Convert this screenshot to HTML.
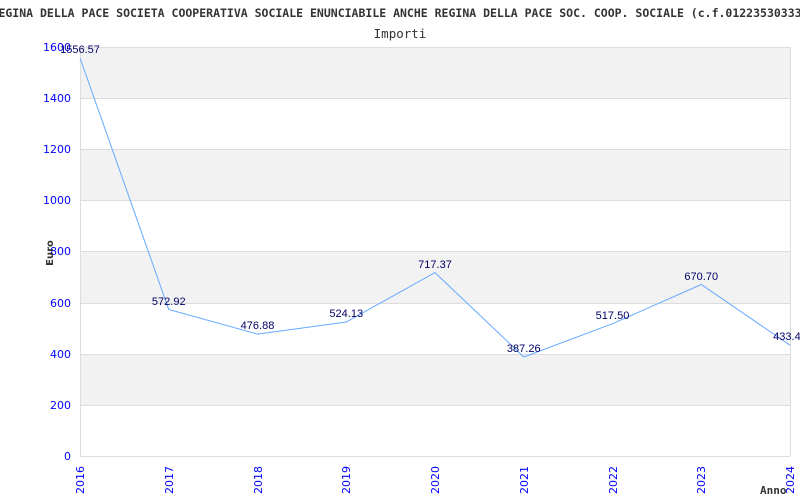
<!DOCTYPE html>
<html><head><meta charset="utf-8"><style>body{margin:0;background:#fff}svg{display:block}</style></head><body>
<svg width="800" height="500" xmlns="http://www.w3.org/2000/svg">
<rect width="800" height="500" fill="#fff"/>
<text x="400" y="17" text-anchor="middle" font-family="DejaVu Sans Mono, Liberation Mono, monospace" font-size="11.5" font-weight="bold" fill="#333">REGINA DELLA PACE SOCIETA COOPERATIVA SOCIALE ENUNCIABILE ANCHE REGINA DELLA PACE SOC. COOP. SOCIALE (c.f.01223530333)</text>
<text x="400" y="38" text-anchor="middle" font-family="DejaVu Sans Mono, monospace" font-size="12.5" fill="#333">Importi</text>
<g fill="#f2f2f2">
<rect x="80" y="47" width="710" height="51"/><rect x="80" y="149" width="710" height="51"/><rect x="80" y="251" width="710" height="52"/><rect x="80" y="354" width="710" height="51"/>
</g>
<g stroke="#ddd" stroke-width="1">
<line x1="80" y1="47.5" x2="790" y2="47.5"/><line x1="80" y1="98.5" x2="790" y2="98.5"/><line x1="80" y1="149.5" x2="790" y2="149.5"/><line x1="80" y1="200.5" x2="790" y2="200.5"/><line x1="80" y1="251.5" x2="790" y2="251.5"/><line x1="80" y1="303.5" x2="790" y2="303.5"/><line x1="80" y1="354.5" x2="790" y2="354.5"/><line x1="80" y1="405.5" x2="790" y2="405.5"/><line x1="80" y1="456.5" x2="790" y2="456.5"/>
<line x1="80.5" y1="47" x2="80.5" y2="456"/><line x1="790.5" y1="47" x2="790.5" y2="456"/>
</g>
<g font-family="DejaVu Sans, Liberation Sans, sans-serif" font-size="11" fill="#00f" text-anchor="end">
<text x="71" y="51">1600</text><text x="71" y="102">1400</text><text x="71" y="153">1200</text><text x="71" y="204">1000</text><text x="71" y="255">800</text><text x="71" y="307">600</text><text x="71" y="358">400</text><text x="71" y="409">200</text><text x="71" y="460">0</text>
</g>
<text transform="translate(53,253) rotate(-90)" text-anchor="middle" font-family="DejaVu Sans, sans-serif" font-size="10" font-weight="bold" fill="#333">Euro</text>
<text x="760" y="494" font-family="DejaVu Sans Mono, monospace" font-size="11" font-weight="bold" fill="#333">Anno</text>
<g font-family="DejaVu Sans, Liberation Sans, sans-serif" font-size="11" fill="#00f">
<text transform="translate(84,494) rotate(-90)">2016</text>
<text transform="translate(173,494) rotate(-90)">2017</text>
<text transform="translate(262,494) rotate(-90)">2018</text>
<text transform="translate(350,494) rotate(-90)">2019</text>
<text transform="translate(439,494) rotate(-90)">2020</text>
<text transform="translate(528,494) rotate(-90)">2021</text>
<text transform="translate(617,494) rotate(-90)">2022</text>
<text transform="translate(705,494) rotate(-90)">2023</text>
<text transform="translate(794,494) rotate(-90)">2024</text>
</g>
<polyline fill="none" stroke="#6af" stroke-width="1" points="80,58 168.75,309.5 257.5,334.1 346.25,322 435,272.6 523.75,357 612.5,323.7 701.25,284.5 790,345.2"/>
<g font-family="Liberation Sans, sans-serif" font-size="11" fill="#006" text-anchor="middle">
<text x="80" y="53">1556.57</text><text x="168.75" y="305">572.92</text><text x="257.5" y="329">476.88</text><text x="346.25" y="317">524.13</text><text x="435" y="268">717.37</text><text x="523.75" y="352">387.26</text><text x="612.5" y="319">517.50</text><text x="701.25" y="280">670.70</text><text x="790" y="340">433.40</text>
</g>
</svg>
</body></html>
